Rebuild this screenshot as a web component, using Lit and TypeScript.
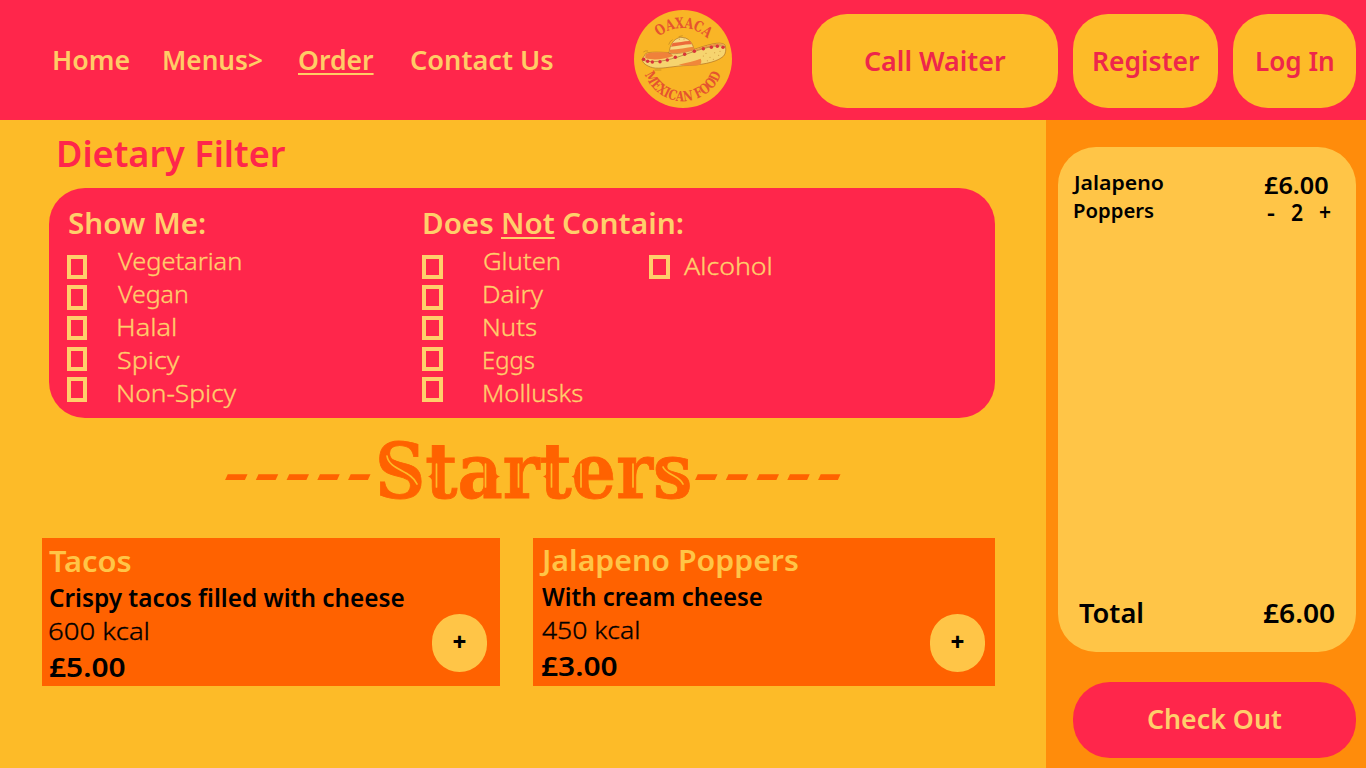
import { LitElement, html, css, svg } from "lit";
import { customElement, property, state } from "lit/decorators.js";

/** One line of text whose drawn glyphs span exactly `ink` pixels. */
@customElement("fit-text")
class FitText extends LitElement {
  @property() text = "";
  @property({ type: Number }) ink = 0;
  @property({ type: Boolean }) spread = false;
  @state() private spacing = 0;
  @state() private shift = 0;
  @state() private scale = 1;

  static styles = css`
    :host { display: block; white-space: pre; }
    span { display: inline-block; transform-origin: 0 50%; text-decoration: inherit; }
  `;

  firstUpdated() {
    const cs = getComputedStyle(this);
    const ctx = document.createElement("canvas").getContext("2d")!;
    ctx.font = `${cs.fontStyle} ${cs.fontWeight} ${cs.fontSize} ${cs.fontFamily}`;
    const m = ctx.measureText(this.text);
    const natural = m.actualBoundingBoxLeft + m.actualBoundingBoxRight;
    if (this.spread) {
      this.spacing = (this.ink - natural) / Math.max(1, this.text.length - 1);
    } else {
      this.scale = this.ink / natural;
    }
    this.shift = m.actualBoundingBoxLeft * this.scale;
  }

  render() {
    return html`<style>:host { width: ${this.ink}px; }</style><span
      style="letter-spacing:${this.spacing}px;margin-left:${this.shift}px;transform:scaleX(${this.scale})">${this.text}</span>`;
  }
}

const t = (text: string, ink: number, cls = "", spread = false) =>
  html`<fit-text class=${cls} .text=${text} .ink=${ink} .spread=${spread}></fit-text>`;

type Line = [string, number];

const showMe: Line[] = [["Vegetarian", 122.8], ["Vegan", 69.2], ["Halal", 57.3], ["Spicy", 62], ["Non-Spicy", 118.5]];
const without: Line[] = [["Gluten", 75.5], ["Dairy", 59.5], ["Nuts", 52.5], ["Eggs", 50.5], ["Mollusks", 98.7]];

const pompoms = [[71, 178], [83, 184], [97, 186], [120, 185], [142, 180], [166, 172], [194, 163], [223, 154], [250, 146], [274, 142], [292, 139], [309, 142]];

const logo = html`<svg class="logo" viewBox="42 30 294 294" aria-label="Oaxaca Mexican Food">
  <defs>
    <path id="arc-top" d="M117 110 A107 107 0 0 1 262 115" />
    <path id="arc-low" d="M75 223 A121 121 0 0 0 303 223" />
  </defs>
  <circle cx="189" cy="177" r="147" fill="#f9b526" />
  <text class="logo-text" font-size="44"><textPath href="#arc-top" textLength="160" lengthAdjust="spacingAndGlyphs">OAXACA</textPath></text>
  <text class="logo-text" font-size="42"><textPath href="#arc-low" textLength="298" lengthAdjust="spacingAndGlyphs">MEXICAN FOOD</textPath></text>
  <path d="M74 166 C76 156 96 155 150 158 L222 148 C260 136 300 122 314 134 C320 145 318 165 306 172 C285 188 240 196 190 197 C150 200 120 208 98 203 C80 198 68 190 66 178 Z" fill="#f6d46f" stroke="#9a5a1c" stroke-width="1.6" />
  <path d="M76 166 C78 157 100 155 150 158 L160 168 C130 178 100 182 76 174 Z" fill="#f0813a" />
  <path d="M222 150 C262 136 298 124 312 134 C290 134 255 142 212 156 Z" fill="#f0913f" />
  <path d="M176 194 C200 188 222 184 242 176 C246 184 244 192 238 195 C216 198 196 197 176 194 Z" fill="#f0873a" />
  <path d="M147 160 C150 134 160 116 182 112 C204 112 218 126 222 149 C200 156 170 164 147 160 Z" fill="#f8d982" stroke="#9a5a1c" stroke-width="1.6" />
  <path d="M158 129 C176 128 196 122 210 123 L216 133 C196 132 176 139 153 140 Z" fill="#ec6b3a" />
  <path d="M150 149 C176 148 200 142 220 140 L222 149 C200 156 172 163 149 158 Z" fill="#f0873a" />
  <path d="M66 180 C110 194 160 176 212 158 C260 142 296 132 316 140" fill="none" stroke="#8a5a20" stroke-width="1.6" />
  <path d="M70 156 Q76 151 84 153 M146 134 Q150 122 158 119 M104 210 H124 M188 107 L176 110" fill="none" stroke="#b07a20" stroke-width="1.6" />
  <g fill="#c98a35">${[[258, 160], [270, 172], [284, 158], [296, 166], [262, 182], [280, 178], [300, 154], [250, 168], [178, 118], [192, 117]].map(([x, y]) => svg`<circle cx=${x} cy=${y} r="1.5" />`)}</g>
  <g fill="#d8323a">${pompoms.map(([x, y]) => svg`<circle cx=${x} cy=${y} r="5.2" />`)}</g>
</svg>`;

// Inline cuts and side spurs that give the section title its western look.
const ornament = html`<svg class="ornament" viewBox="0 0 312 120" aria-hidden="true">
  <g fill="none" stroke="#fdbb28" stroke-width="1.7" stroke-linecap="round">
    ${[57.5, 106.5, 139.5, 172.5, 202, 254].map((x) => svg`<path d="M${x} 46 V69" />`)}
    <path d="M8 38 C10 52 32 52 38 66" />
    <path d="M284 49 C287 57 300 57 304 66" />
  </g>
  <g fill="#ff6200">
    ${[53.5, 136, 168.5, 197, 250.5].map((x) => svg`<path d="M${x + 1.5} 50 Q${x} 57 ${x - 4.5} 58.500 Q${x} 60 ${x + 1.5} 67 Z" />`)}
    <path d="M115 51 Q116 57 121 58.500 Q116 60 115 66 Z" />
  </g>
</svg>`;

@customElement("app-root")
class AppRoot extends LitElement {
  static styles = css`
    :host {
      display: flex; flex-direction: column; box-sizing: border-box;
      width: 1366px; height: 768px; overflow: hidden; background: #fdbb28;
      font-family: "Noto Sans", "Open Sans", sans-serif; font-weight: 600; color: #000;
    }
    button { font: inherit; color: inherit; border: 0; padding: 0; margin: 0; display: flex; align-items: center; justify-content: center; }
    header { flex: none; height: 120px; display: flex; background: #ff264b; box-sizing: border-box; padding-left: 54px; }
    nav { display: grid; grid-template-columns: 109.8px 135.3px 111.9px 142px; width: 580px; padding-top: 42px; box-sizing: border-box; font-size: 26.7px; line-height: 36px; color: #ffcc66; }
    .current { text-decoration: underline; text-decoration-thickness: 2px; text-underline-offset: 2.5px; }
    .logo { width: 98px; height: 98px; margin: 10px 80px 0 0; }
    .logo-text { font-family: "DejaVu Serif", serif; font-weight: 700; fill: #e5532f; }
    .actions { display: flex; gap: 15px; padding-top: 14px; font-size: 26.7px; line-height: 36px; color: #ee264b; }
    .actions button { height: 93.5px; border-radius: 35px; background: #fdbb28; }
    .call { width: 246px; }
    .actions .register { width: 145px; padding-left: 2px; box-sizing: border-box; }
    .actions .login { width: 123px; padding-left: 1px; box-sizing: border-box; }

    .body { flex: 1; display: flex; min-height: 0; }
    main { width: 1046px; }
    .title { font-size: 35.5px; line-height: 40px; color: #ff264b; padding: 13px 0 15px 59px; }
    .panel { margin-left: 49px; width: 946px; height: 230px; box-sizing: border-box; border-radius: 36px; background: #ff264b; color: #ffcf6b;
      padding: 16.5px 0 0 17.5px; display: grid; grid-template-columns: 355.5px 227px auto; grid-template-rows: 36px auto; }
    .heading { font-size: 29.4px; line-height: 36px; display: flex; padding-left: 2.3px; }
    .wide { grid-column: 2 / 4; padding-left: 1.5px; }
    .not { margin: 0 8.4px 0 10px; }
    .group { display: flex; align-items: flex-start; }
    .boxes { display: flex; flex-direction: column; gap: 6.2px; margin-top: 14px; }
    .box { width: 20.5px; height: 24.5px; box-sizing: border-box; border: 4px solid #ffcf6b; }
    .labels { font-size: 24.3px; line-height: 33px; font-weight: 300; -webkit-text-stroke: 0.35px currentColor; margin: 3.8px 0 0 31px; }
    .gap-wide { margin-left: 41.5px; }
    .gap-slim { margin: 8.5px 0 0 14px; }

    .section { display: flex; height: 120px; padding-left: 226px; color: #ff6200; }
    .dashes { font: 400 76px/98px "Liberation Serif", serif; transform: skewX(-25deg); transform-origin: 0 58px; padding-top: 2px; }
    .title-word { position: relative; margin: 0 6px 0 9.5px; }
    .word { font: 700 76px/108px "DejaVu Serif", serif; -webkit-text-stroke: 0.8px currentColor; }
    .ornament { position: absolute; left: -1px; top: 0; width: 312px; height: 120px; }

    .cards { display: flex; gap: 33px; padding-left: 42px; }
    .card { width: 458px; height: 148px; box-sizing: border-box; background: #ff6200; padding: 4.8px 13px 14px 7.5px; display: flex; justify-content: space-between; align-items: flex-start; }
    .second { width: 462px; padding: 3.8px 10px 14px 8.5px; }
    .name { font-size: 29.4px; line-height: 36px; color: #ffc547; margin: 0 0 2.5px -0.5px; }
    .second .name { margin-left: -2.5px; }
    .desc { font-size: 24.3px; line-height: 33px; }
    .kcal { font-size: 24.3px; line-height: 33px; font-weight: 300; -webkit-text-stroke: 0.35px currentColor; margin-bottom: 1.5px; }
    .price { font-size: 27px; line-height: 36px; padding-left: 0.5px; }
    .add { align-self: flex-end; width: 55px; height: 58px; box-sizing: border-box; padding-bottom: 2px; border-radius: 27.5px; background: #ffc547; font-size: 24px; line-height: 30px; font-weight: 800; }

    aside { width: 320px; box-sizing: border-box; background: #ff8c0b; padding: 27px 10px 0 12px; display: flex; flex-direction: column; align-items: flex-end; }
    .order { width: 298px; height: 505px; box-sizing: border-box; border-radius: 38px; background: #ffc547; padding: 21px 0 21px 15.5px; display: flex; flex-direction: column; justify-content: space-between; }
    .row { display: flex; }
    .item { width: 190.5px; font-size: 20.5px; line-height: 28px; }
    .jay { margin-left: -2px; }
    .cost { font-size: 23px; line-height: 28px; padding-top: 2.6px; }
    .stepper { display: grid; grid-template-columns: 24px 29px 12px; padding-left: 3px; line-height: 27px; }
    .total { font-size: 26.5px; line-height: 36px; padding-left: 5.5px; gap: 120px; }
    .checkout { margin-top: 30px; width: 283px; height: 75.5px; box-sizing: border-box; padding-bottom: 2px; border-radius: 37px; background: #ff264b; color: #ffcf6b; font-size: 26.7px; line-height: 36px; }
  `;

  private group(lines: Line[], gap = "") {
    return html`<div class="group">
      <div class="boxes">${lines.map(() => html`<div class="box"></div>`)}</div>
      <div class="labels ${gap}">${lines.map(([s, w]) => t(s, w))}</div>
    </div>`;
  }

  private card(cls: string, name: Line, desc: Line, kcal: Line, price: Line) {
    return html`<div class="card ${cls}">
      <div>${t(name[0], name[1], "name")}${t(desc[0], desc[1], "desc")}${t(kcal[0], kcal[1], "kcal")}${t(price[0], price[1], "price")}</div>
      <button class="add">+</button>
    </div>`;
  }

  render() {
    return html`
      <header>
        <nav>${t("Home", 75.5)}${t("Menus>", 98.7)}${t("Order", 75, "current")}${t("Contact Us", 142.5)}</nav>
        ${logo}
        <div class="actions">
          <button class="call">${t("Call Waiter", 141)}</button>
          <button class="register">${t("Register", 105.8)}</button>
          <button class="login">${t("Log In", 76.8)}</button>
        </div>
      </header>
      <div class="body">
        <main>
          ${t("Dietary Filter", 226, "title")}
          <section class="panel">
            <div class="heading">${t("Show Me:", 136)}</div>
            <div class="heading wide">${t("Does", 69.2)}${t("Not", 51.8, "not current")}${t("Contain:", 119.8)}</div>
            ${this.group(showMe)}${this.group(without, "gap-wide")}${this.group([["Alcohol", 87]], "gap-slim")}
          </section>
          <div class="section">
            ${t("-----", 144, "dashes", true)}
            <div class="title-word">${t("Starters", 310, "word")}${ornament}</div>
            ${t("-----", 144, "dashes", true)}
          </div>
          <div class="cards">
            ${this.card("", ["Tacos", 82.3], ["Crispy tacos filled with cheese", 354.5], ["600 kcal", 99], ["£5.00", 75])}
            ${this.card("second", ["Jalapeno Poppers", 259.5], ["With cream cheese", 220.5], ["450 kcal", 96.5], ["£3.00", 75])}
          </div>
        </main>
        <aside>
          <div class="order">
            <div class="row">
              <div class="item">${t("Jalapeno", 91.3, "jay")}${t("Poppers", 80)}</div>
              <div class="cost">${t("£6.00", 64.5)}
                <div class="stepper">${t("-", 7.5)}${t("2", 12)}${t("+", 11)}</div>
              </div>
            </div>
            <div class="row total">${t("Total", 63.5)}${t("£6.00", 72)}</div>
          </div>
          <button class="checkout">${t("Check Out", 134)}</button>
        </aside>
      </div>
    `;
  }
}
